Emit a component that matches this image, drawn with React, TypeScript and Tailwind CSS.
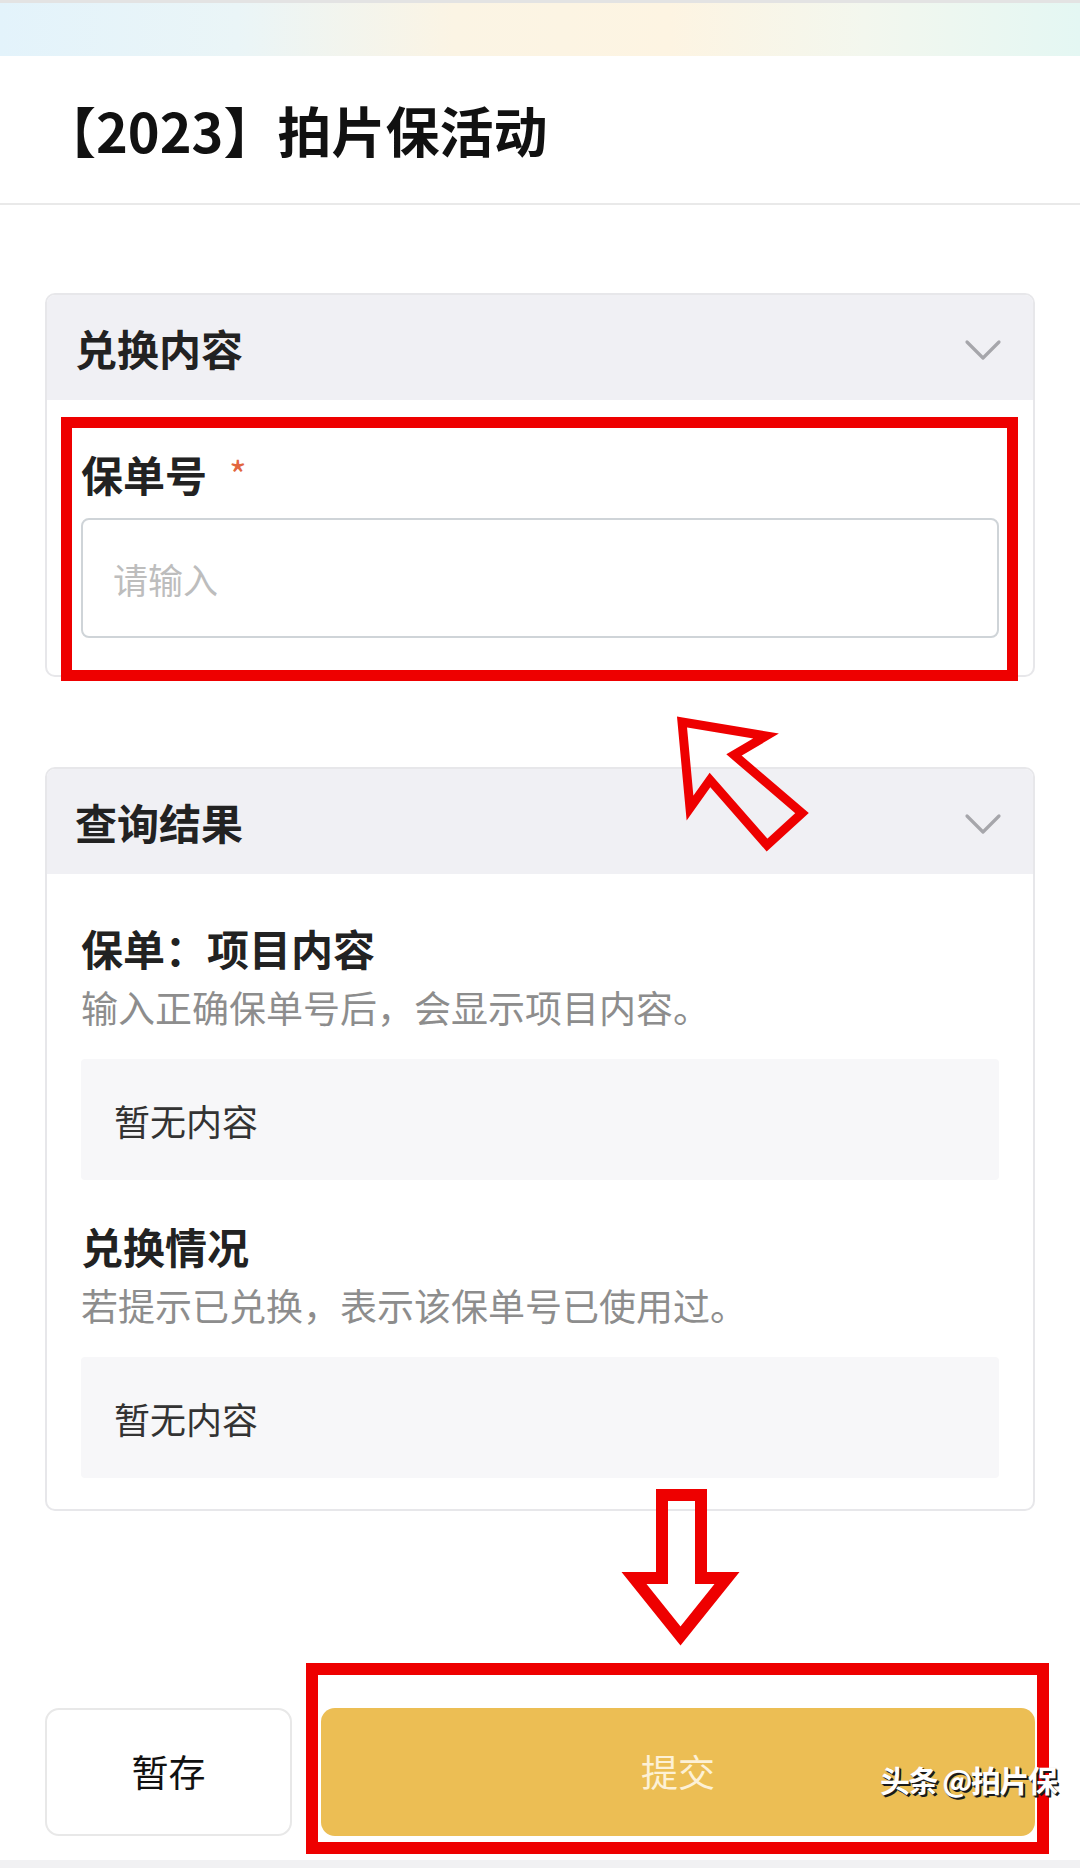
import React from "react";

function Chevron() {
  return (
    <svg width="38" height="22" viewBox="0 0 38 22" fill="none">
      <polyline points="3,3 19,19 35,3" stroke="#a6a6ab" strokeWidth="3.2" strokeLinecap="round" strokeLinejoin="round" />
    </svg>
  );
}

function CardHeader({ title }: { title: string }) {
  return (
    <div className="h-[105px] bg-[#f0f0f4] flex items-center justify-between pl-[28px] pr-[31px]">
      <h2 className="text-[42px] font-bold leading-none text-[#222]">{title}</h2>
      <div className="mt-[4px]">
        <Chevron />
      </div>
    </div>
  );
}

function ResultBlock({ title, hint, top }: { title: string; hint: string; top: string }) {
  return (
    <div className={top}>
      <h3 className="text-[42px] font-bold leading-[48px] text-[#222]">{title}</h3>
      <p className="mt-[13px] text-[37px] leading-[44px] text-[#8d8d8d]">{hint}</p>
      <div className="mt-[30px] h-[121px] rounded-[4px] bg-[#f7f7f9] flex items-center pl-[33px] text-[36px] text-[#333]">
        暂无内容
      </div>
    </div>
  );
}

export default function App() {
  return (
    <div className="relative w-[1080px] h-[1868px] overflow-hidden bg-white font-['Noto_Sans_CJK_SC','Noto_Sans',sans-serif] text-[#222]">
      {/* gradient strip under the status bar */}
      <div className="h-[56px] border-t-[3px] border-[#e3e3e3] bg-[linear-gradient(90deg,#e3f3fb_0%,#eaf5f7_22%,#fbf4e4_42%,#fdf4e2_62%,#f3f7ee_80%,#e4f7f3_100%)]" />

      <header className="h-[149px] flex items-center pl-[42px] border-b-2 border-[#e9e9e9]">
        <h1 className="text-[54px] font-bold leading-none text-[#111]">【2023】拍片保活动</h1>
      </header>

      <main className="px-[45px] pt-[88px]">
        {/* exchange form */}
        <section className="rounded-[10px] border-2 border-[#e7e7ea] overflow-hidden">
          <CardHeader title="兑换内容" />
          <div className="px-[34px] pt-[50px] pb-[37px]">
            <label className="flex items-start text-[42px] font-bold leading-[48px] text-[#222]">
              保单号
              <span className="ml-[22px] mt-[4px] text-[38px] font-normal leading-[40px] text-[#e2663f]">*</span>
            </label>
            <input
              className="mt-[20px] block w-full h-[120px] rounded-[8px] border-2 border-[#cfd4d8] px-[30px] text-[35px] outline-none placeholder:text-[#bdbdbd]"
              placeholder="请输入"
            />
          </div>
        </section>

        {/* query result */}
        <section className="mt-[90px] rounded-[10px] border-2 border-[#e7e7ea] overflow-hidden">
          <CardHeader title="查询结果" />
          <div className="px-[34px] pt-[50px] pb-[31px]">
            <ResultBlock title="保单：项目内容" hint="输入正确保单号后，会显示项目内容。" top="" />
            <ResultBlock title="兑换情况" hint="若提示已兑换，表示该保单号已使用过。" top="mt-[42px]" />
          </div>
        </section>

        <div className="mt-[197px] flex gap-[29px]">
          <button className="w-[247px] h-[128px] rounded-[14px] border-2 border-[#e8e8e8] bg-white text-[37px] text-[#111]">
            暂存
          </button>
          <button className="flex-1 h-[128px] rounded-[14px] bg-[#ecbe54] text-[37px] text-[#fdf1d6]">
            提交
          </button>
        </div>
      </main>

      <div className="absolute left-0 bottom-0 w-full h-[8px] bg-[#f1f1f3]" />

      {/* annotation: box around the policy number field */}
      <div className="absolute left-[61px] top-[417px] w-[957px] h-[264px] border-[11px] border-[#ee0000]" />

      {/* annotation: arrow pointing to the field */}
      <svg className="absolute left-[660px] top-[700px]" width="165" height="165" viewBox="0 0 165 165" fill="none">
        <polygon
          points="22,22 106,36 74,55 142,113 107,145 50,80 30,108"
          stroke="#ee0000"
          strokeWidth="9"
          strokeLinejoin="miter"
          strokeMiterlimit="4"
        />
      </svg>

      {/* annotation: arrow pointing down to submit */}
      <svg className="absolute left-[615px] top-[1480px]" width="130" height="180" viewBox="0 0 130 180" fill="none">
        <polygon
          points="47,15 86,15 86,98 112,98 65.5,156 19,98 47,98"
          stroke="#ee0000"
          strokeWidth="12"
          strokeLinejoin="miter"
          strokeMiterlimit="3"
        />
      </svg>

      {/* annotation: box around submit */}
      <div className="absolute left-[306px] top-[1663px] w-[743px] h-[191px] border-[12px] border-[#ee0000]" />

      <div className="absolute left-[880px] top-[1758px] text-[30px] font-bold leading-[42px] tracking-[-1.5px] text-white [text-shadow:2px_2px_0_#1a1a1a,1px_1px_1px_#000]">
        头条 @拍片保
      </div>
    </div>
  );
}
